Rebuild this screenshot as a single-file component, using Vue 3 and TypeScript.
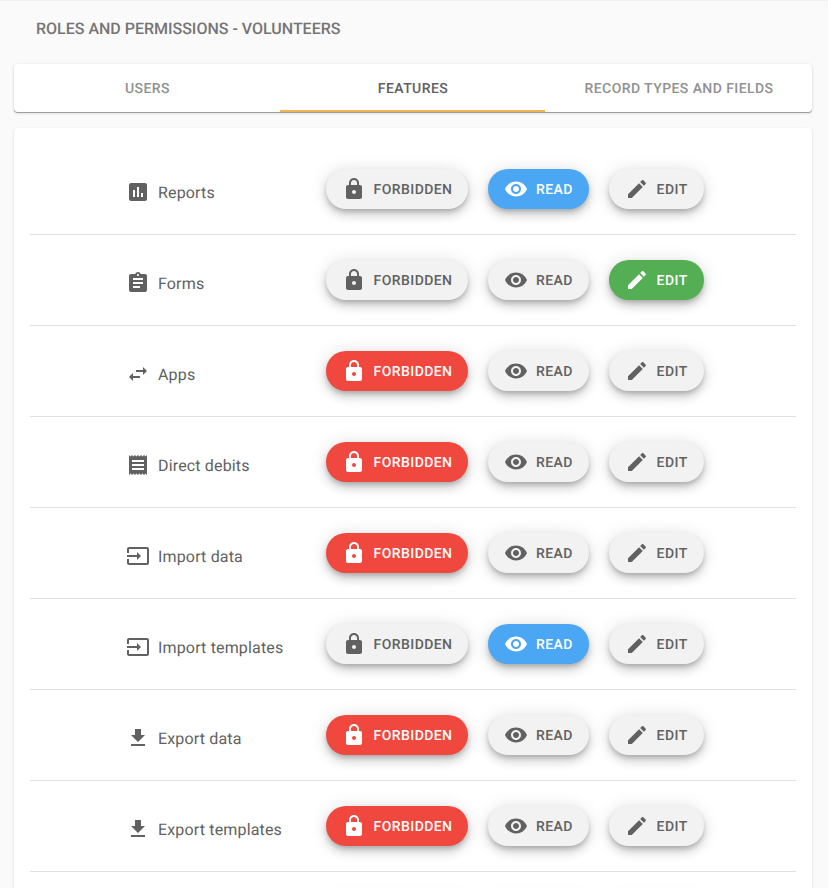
<script setup lang="ts">
import { ref } from 'vue'

type Level = 'forbidden' | 'read' | 'edit'

interface Feature {
  label: string
  icon: string
  level: Level
}

const icons: Record<string, string> = {
  assessment:
    'M19 3H5c-1.1 0-2 .9-2 2v14c0 1.1.9 2 2 2h14c1.1 0 2-.9 2-2V5c0-1.1-.9-2-2-2zM9 17H7v-7h2v7zm4 0h-2V7h2v10zm4 0h-2v-4h2v4z',
  assignment:
    'M19 3h-4.18C14.4 1.84 13.3 1 12 1c-1.3 0-2.4.84-2.82 2H5c-1.1 0-2 .9-2 2v14c0 1.1.9 2 2 2h14c1.1 0 2-.9 2-2V5c0-1.1-.9-2-2-2zm-7 0c.55 0 1 .45 1 1s-.45 1-1 1-1-.45-1-1 .45-1 1-1zm2 14H7v-2h7v2zm3-4H7v-2h10v2zm0-4H7V7h10v2z',
  swap: 'M6.99 11L3 15l3.99 4v-3H14v-2H6.99v-3zM21 9l-3.99-4v3H10v2h7.01v3L21 9z',
  receipt:
    'M18 17H6v-2h12v2zm0-4H6v-2h12v2zm0-4H6V7h12v2zM3 22l1.5-1.5L6 22l1.5-1.5L9 22l1.5-1.5L12 22l1.5-1.5L15 22l1.5-1.5L18 22l1.5-1.5L21 22V2l-1.5 1.5L18 2l-1.5 1.5L15 2l-1.5 1.5L12 2l-1.5 1.5L9 2 7.5 3.5 6 2 4.5 3.5 3 2v20z',
  input:
    'M21 3.01H3c-1.1 0-2 .9-2 2V9h2V4.99h18v14.03H3V15H1v4.01c0 1.1.9 1.98 2 1.98h18c1.1 0 2-.88 2-1.98v-14c0-1.11-.9-2-2-2zM11 16l4-4-4-4v3H1v2h10v3z',
  download: 'M19 9h-4V3H9v6H5l7 7 7-7zM5 18v2h14v-2H5z',
  forbidden:
    'M18 8h-1V6c0-2.76-2.24-5-5-5S7 3.24 7 6v2H6c-1.1 0-2 .9-2 2v10c0 1.1.9 2 2 2h12c1.1 0 2-.9 2-2V10c0-1.1-.9-2-2-2zm-6 9c-1.1 0-2-.9-2-2s.9-2 2-2 2 .9 2 2-.9 2-2 2zm3.1-9H8.9V6c0-1.71 1.39-3.1 3.1-3.1 1.71 0 3.1 1.39 3.1 3.1v2z',
  read: 'M12 4.5C7 4.5 2.73 7.61 1 12c1.73 4.39 6 7.5 11 7.5s9.27-3.11 11-7.5c-1.73-4.39-6-7.5-11-7.5zM12 17c-2.76 0-5-2.24-5-5s2.24-5 5-5 5 2.24 5 5-2.24 5-5 5zm0-8c-1.66 0-3 1.34-3 3s1.34 3 3 3 3-1.34 3-3-1.34-3-3-3z',
  edit: 'M3 17.25V21h3.75L17.81 9.94l-3.75-3.75L3 17.25zM20.71 7.04c.39-.39.39-1.02 0-1.41l-2.34-2.34c-.39-.39-1.02-.39-1.41 0l-1.83 1.83 3.75 3.75 1.83-1.83z',
}

const tabs = ['Users', 'Features', 'Record types and fields']
const activeTab = ref('Features')
const levels: Level[] = ['forbidden', 'read', 'edit']

const features = ref<Feature[]>([
  { label: 'Reports', icon: 'assessment', level: 'read' },
  { label: 'Forms', icon: 'assignment', level: 'edit' },
  { label: 'Apps', icon: 'swap', level: 'forbidden' },
  { label: 'Direct debits', icon: 'receipt', level: 'forbidden' },
  { label: 'Import data', icon: 'input', level: 'forbidden' },
  { label: 'Import templates', icon: 'input', level: 'read' },
  { label: 'Export data', icon: 'download', level: 'forbidden' },
  { label: 'Export templates', icon: 'download', level: 'forbidden' },
])
</script>

<template>
  <main class="page">
    <h1 class="title">Roles and permissions - Volunteers</h1>
    <nav class="tabs">
      <button
        v-for="tab in tabs"
        :key="tab"
        class="tab"
        :class="{ active: tab === activeTab }"
        @click="activeTab = tab"
      >
        {{ tab }}
      </button>
    </nav>
    <section class="card">
      <div v-for="feature in features" :key="feature.label" class="row">
        <div class="feature">
          <svg class="icon" viewBox="0 0 24 24"><path :d="icons[feature.icon]" /></svg>
          <span class="label">{{ feature.label }}</span>
        </div>
        <div class="levels">
          <button
            v-for="level in levels"
            :key="level"
            class="level"
            :class="[`is-${level}`, { selected: feature.level === level }]"
            @click="feature.level = level"
          >
            <svg class="icon" viewBox="0 0 24 24"><path :d="icons[level]" /></svg>
            <span class="level-text">{{ level }}</span>
          </button>
        </div>
      </div>
      <div class="row placeholder">
        <div class="levels">
          <div v-for="level in levels" :key="level" class="level" :class="`is-${level}`"></div>
        </div>
      </div>
    </section>
  </main>
</template>

<style>
body {
  background: #fafafa;
  overflow: hidden;
}
</style>

<style scoped>
.page {
  box-sizing: border-box;
  height: 888px;
  overflow: hidden;
  padding: 0 16px 0 14px;
  background: #fafafa;
  box-shadow: inset 0 1px 1px #f0f0f0;
  font-family: Roboto, sans-serif;
  color: #616161;
  text-rendering: geometricPrecision;
}
.title {
  margin: 0;
  padding: 17px 22px 23px;
  font-size: 16px;
  font-weight: 500;
  line-height: 24px;
  letter-spacing: -0.01px;
  color: #757575;
  text-transform: uppercase;
}
button {
  border: 0;
  font: 500 14px/20px Roboto, sans-serif;
  text-transform: uppercase;
  text-rendering: geometricPrecision;
  cursor: pointer;
}
.tabs {
  display: grid;
  grid-template-columns: 266px 265px 267px;
  height: 48px;
  border-radius: 4px;
  background: #fff;
  overflow: hidden;
  box-shadow: 0 1px 0 #9e9e9e, 0 1px 3px rgba(0, 0, 0, 0.2);
}
.tab {
  padding: 4px 0 0 1px;
  background: none;
  border-bottom: 2px solid transparent;
  letter-spacing: 0.42px;
  color: #919191;
}
.tab.active {
  color: #616161;
  border-bottom-color: #f2b450;
}
.card {
  margin-top: 16px;
  padding: 16px;
  border-radius: 4px;
  background: #fff;
  box-shadow: 0 1px 3px rgba(0, 0, 0, 0.14);
}
.row {
  display: flex;
  align-items: flex-start;
  height: 90px;
  border-bottom: 1px solid #e0e0e0;
}
.row.placeholder {
  padding-left: 296px;
}
.feature {
  display: flex;
  align-items: center;
  gap: 8px;
  width: 200px;
  padding: 36px 0 0 96px;
  font-size: 16px;
  line-height: 24px;
  letter-spacing: 0.16px;
}
.label {
  margin: 1px 0 -1px;
}
.icon {
  flex: none;
  width: 24px;
  height: 24px;
  fill: currentColor;
}
.levels {
  display: flex;
  gap: 20px;
  padding-top: 25px;
}
.level {
  box-sizing: border-box;
  display: flex;
  align-items: center;
  gap: 7.6px;
  height: 40px;
  padding: 0 0 0 16px;
  border-radius: 20px;
  background: #f2f2f2;
  color: #616161;
  letter-spacing: 0.42px;
  box-shadow:
    0 3px 5px -1px rgba(0, 0, 0, 0.2),
    0 6px 10px rgba(0, 0, 0, 0.14),
    0 1px 18px rgba(0, 0, 0, 0.12);
}
.level-text {
  padding-top: 2px;
}
.is-forbidden {
  width: 142px;
}
.is-read {
  width: 101px;
  gap: 8px;
}
.is-edit {
  width: 95px;
}
.selected {
  color: #fff;
}
.selected.is-forbidden {
  background: #f0483e;
}
.selected.is-read {
  background: #4ba6f3;
}
.selected.is-edit {
  background: #53ae54;
}
</style>
